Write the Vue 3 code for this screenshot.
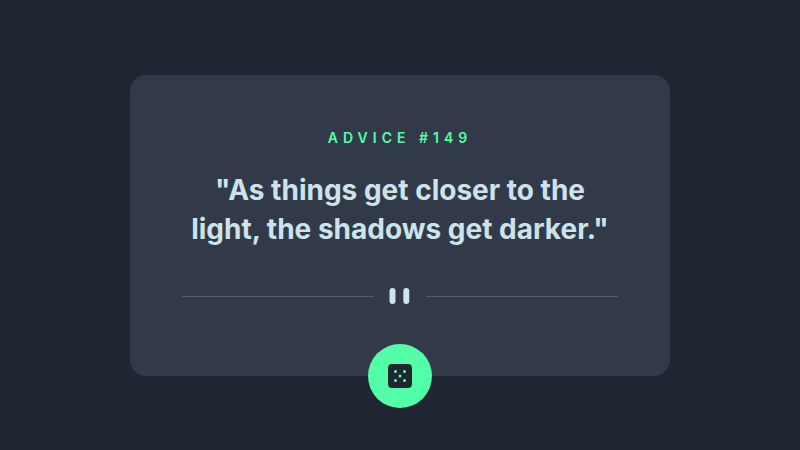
<script setup>
import { ref } from 'vue'

const entries = [
  { id: 149, text: 'As things get closer to the light, the shadows get darker.' },
]
const index = ref(0)

function roll() {
  index.value = (index.value + 1) % entries.length
}
</script>

<template>
  <main class="page">
    <article class="card">
      <h1 class="label">Advice #{{ entries[index].id }}</h1>
      <p class="quote">"{{ entries[index].text }}"</p>
      <div class="divider" aria-hidden="true">
        <span class="line"></span>
        <svg class="pause" width="20" height="16" viewBox="0 0 20 16">
          <rect x="-0.500" width="6" height="16" rx="3" />
          <rect x="13.300" width="6" height="16" rx="3" />
        </svg>
        <span class="line"></span>
      </div>
      <button class="dice" type="button" aria-label="New advice" @click="roll">
        <svg width="24" height="24" viewBox="0 0 24 24" aria-hidden="true">
          <path d="M20 0H4a4.005 4.005 0 0 0-4 4v16a4.005 4.005 0 0 0 4 4h16a4.005 4.005 0 0 0 4-4V4a4.005 4.005 0 0 0-4-4ZM7.500 18a1.500 1.500 0 1 1 0-3 1.500 1.500 0 0 1 0 3Zm0-9a1.500 1.500 0 1 1 0-3 1.500 1.500 0 0 1 0 3Zm4.500 4.500a1.500 1.500 0 1 1 0-3 1.500 1.500 0 0 1 0 3Zm4.500 4.500a1.500 1.500 0 1 1 0-3 1.500 1.500 0 0 1 0 3Zm0-9a1.500 1.500 0 1 1 0-3 1.500 1.500 0 0 1 0 3Z" />
        </svg>
      </button>
    </article>
  </main>
</template>

<style>
body {
  background: #1f2632;
}
</style>

<style scoped>
.page {
  min-height: 100vh;
  box-sizing: border-box;
  display: flex;
  align-items: center;
  justify-content: center;
  padding: 25px 24px 24px;
  font-family: Inter, "Open Sans", sans-serif;
}

.card {
  position: relative;
  box-sizing: border-box;
  width: 100%;
  max-width: 540px;
  padding: 52px 52px 72px;
  border-radius: 16px;
  background: #323a49;
  text-align: center;
}

.label {
  margin: 0;
  font-size: 14px;
  line-height: 22px;
  font-weight: 600;
  letter-spacing: 5px;
  text-transform: uppercase;
  color: #52ffa8;
}

.quote {
  margin: 22px 0 39px;
  font-size: 28px;
  line-height: 39px;
  font-weight: 700;
  color: #cee3e9;
}

.divider {
  display: flex;
  align-items: center;
  gap: 16px;
}

.line {
  flex: 1;
  height: 1px;
  background: #4f5d74;
}

.pause {
  overflow: visible;
  fill: #cee3e9;
}

.dice {
  position: absolute;
  left: 50%;
  bottom: 0;
  transform: translate(-50%, 50%);
  display: grid;
  place-items: center;
  width: 64px;
  height: 64px;
  padding: 0;
  border: 0;
  border-radius: 50%;
  background: #52ffa8;
  cursor: pointer;
}

.dice svg {
  fill: #1f2632;
}
</style>
